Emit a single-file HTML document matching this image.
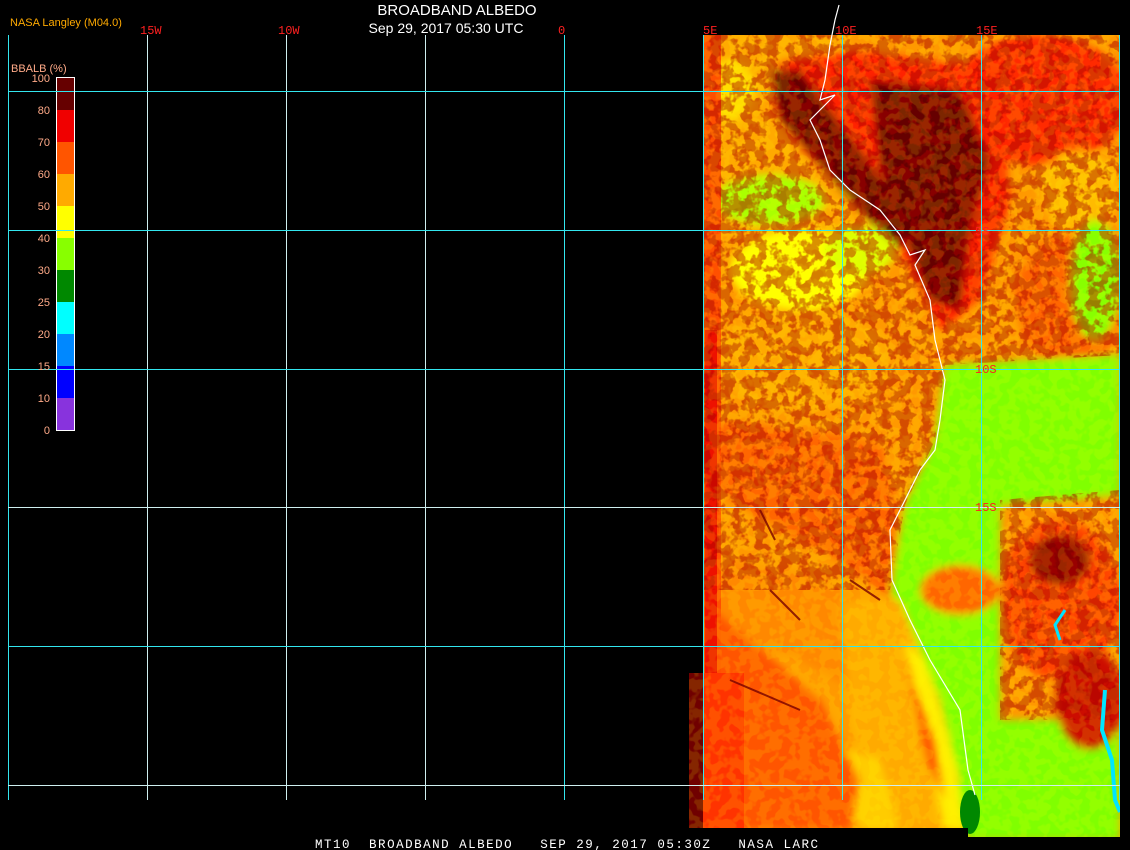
<!DOCTYPE html>
<html><head><meta charset="utf-8"><style>
html,body{margin:0;padding:0;background:#000;width:1130px;height:850px;overflow:hidden}
body{position:relative;font-family:"Liberation Sans",sans-serif}
</style></head><body>
<svg width="1130" height="850" style="position:absolute;left:0;top:0">
<defs>
<filter id="b4"><feGaussianBlur stdDeviation="4"/></filter>
<filter id="noise" x="0" y="0" width="100%" height="100%">
<feTurbulence type="fractalNoise" baseFrequency="0.09" numOctaves="3" seed="4"/>
<feColorMatrix type="matrix" values="0 0 0 0 0.4  0 0 0 0 0  0 0 0 0 0  0 0 0 -9 5.0"/>
</filter>
<filter id="noise2" x="0" y="0" width="100%" height="100%">
<feTurbulence type="fractalNoise" baseFrequency="0.1" numOctaves="2" seed="9"/>
<feColorMatrix type="matrix" values="0 0 0 0 1  0 0 0 0 1  0 0 0 0 0  0 0 0 -10 5.6"/>
</filter>
<clipPath id="map"><polygon points="703,35 1120,35 1120,837 968,837 968,828 689,828 689,673 703,673"/></clipPath>
<clipPath id="spk"><polygon points="703,35 1120,35 1120,355 945,365 935,440 905,505 890,590 703,590"/><polygon points="1000,500 1120,490 1120,720 1000,720"/></clipPath>
</defs>
<g clip-path="url(#map)">
<rect x="689" y="35" width="431" height="802" fill="#ff9900"/>
<g filter="url(#b4)">
<rect x="700" y="35" width="150" height="200" fill="#ffaa00"/>
<ellipse cx="770" cy="200" rx="55" ry="25" fill="#aaff00"/>
<ellipse cx="730" cy="90" rx="25" ry="30" fill="#ffdd00"/>
<ellipse cx="800" cy="270" rx="70" ry="40" fill="#ffff00"/>
<ellipse cx="860" cy="250" rx="35" ry="25" fill="#ddff00"/>
<ellipse cx="800" cy="360" rx="90" ry="50" fill="#ffaa00"/>
<ellipse cx="1040" cy="100" rx="90" ry="65" fill="#ff2a00"/>
<ellipse cx="1080" cy="190" rx="40" ry="40" fill="#ffbb00"/>
<ellipse cx="1070" cy="300" rx="55" ry="65" fill="#ff6600"/>
<ellipse cx="1095" cy="280" rx="25" ry="60" fill="#88ff00"/>
<polygon points="780,60 850,50 1000,70 1010,200 980,300 940,330 900,250 850,200 800,150 770,110" fill="#ff2200"/>
<polygon points="770,70 800,70 860,150 910,220 900,250 850,200 780,120" fill="#660000"/>
<polygon points="870,80 960,90 990,160 970,230 960,310 930,300 905,240 880,170" fill="#660000"/>
<polygon points="945,365 1120,355 1120,495 1000,505 1000,510 905,505 935,440" fill="#80ff00"/>
<polygon points="905,505 1000,505 1000,720 1120,720 1120,840 968,840 955,770 925,660 890,590" fill="#80ff00"/>
<ellipse cx="1060" cy="600" rx="60" ry="80" fill="#ff4400"/>
<ellipse cx="1090" cy="700" rx="35" ry="50" fill="#cc1100"/>
<ellipse cx="1060" cy="560" rx="30" ry="25" fill="#880000"/>
<ellipse cx="960" cy="590" rx="40" ry="25" fill="#ff6600"/>
<polygon points="703,420 880,440 900,520 890,600 840,560 760,520 703,480" fill="#ff6600"/>
<polygon points="703,560 800,570 900,620 930,680 870,700 800,660 703,640" fill="#ff8800"/>
<polygon points="840,600 900,600 940,700 960,780 950,830 880,830 850,720" fill="#ffaa00"/>
<polygon points="905,640 925,660 955,760 965,830 945,830 930,760" fill="#ffee00"/>
<polygon points="820,740 880,760 900,830 860,830" fill="#ffcc00"/>
<polygon points="703,600 820,700 860,780 850,830 703,830" fill="#ff5500"/>
<polygon points="905,660 935,740 945,800 925,760" fill="#ff5500"/>
</g>
<rect x="703" y="35" width="18" height="660" fill="#ff5000"/>
<rect x="705" y="330" width="12" height="360" fill="#ee1100"/>
<rect x="689" y="673" width="55" height="160" fill="#ff3300"/>
<rect x="689" y="673" width="14" height="160" fill="#700000"/>
<g clip-path="url(#spk)">
<rect x="689" y="35" width="431" height="802" filter="url(#noise)" opacity="0.5"/>
</g>
<rect x="689" y="35" width="431" height="802" filter="url(#noise2)" opacity="0.15"/>
<g stroke="#770000" stroke-width="2" fill="none" opacity="0.8">
<path d="M760,510 L775,540"/><path d="M770,590 L800,620"/><path d="M730,680 L800,710"/><path d="M850,580 L880,600"/>
</g>
<ellipse cx="970" cy="812" rx="10" ry="22" fill="#008800"/>
<path d="M1105,690 L1102,730 L1112,760 L1115,800 L1120,812" stroke="#00e5ff" stroke-width="4" fill="none"/>
<path d="M1065,610 L1055,625 L1060,640" stroke="#00e5ff" stroke-width="3" fill="none"/>
</g>
<path d="M839,5 L835,20 L830,45 L825,80 L820,100 L835,95 L810,120 L820,140 L830,170 L850,190 L880,210 L900,235 L910,255 L925,250 L915,265 L930,300 L935,340 L945,380 L940,420 L935,450 L920,470 L905,500 L890,530 L892,580 L910,620 L930,660 L960,710 L968,770 L975,795" stroke="#fff" stroke-width="1.2" fill="none"/>
<g stroke="#33e6ee" stroke-width="1">
<line x1="8.5" y1="35" x2="8.5" y2="800"/>
<line x1="147.5" y1="35" x2="147.5" y2="800" stroke="#cfeff0"/>
<line x1="286.5" y1="35" x2="286.5" y2="800" stroke="#cfeff0"/>
<line x1="425.5" y1="35" x2="425.5" y2="800" stroke="#cfeff0"/>
<line x1="564.5" y1="35" x2="564.5" y2="800"/>
<line x1="703.5" y1="35" x2="703.5" y2="800"/>
<line x1="842.5" y1="35" x2="842.5" y2="800"/>
<line x1="981.5" y1="35" x2="981.5" y2="800"/>
<line x1="1119.5" y1="35" x2="1119.5" y2="800"/>
<line x1="8" y1="91.5" x2="1120" y2="91.5"/>
<line x1="8" y1="230.5" x2="1120" y2="230.5"/>
<line x1="8" y1="369.5" x2="1120" y2="369.5"/>
<line x1="8" y1="507.5" x2="1120" y2="507.5" stroke="#cfeff0"/>
<line x1="8" y1="646.5" x2="1120" y2="646.5"/>
<line x1="8" y1="785.5" x2="1120" y2="785.5" stroke="#cfeff0"/>
</g>
<g>
<rect x="57" y="78" width="17" height="32" fill="#660000"/>
<rect x="57" y="110" width="17" height="32" fill="#f00000"/>
<rect x="57" y="142" width="17" height="32" fill="#ff5500"/>
<rect x="57" y="174" width="17" height="32" fill="#ffaa00"/>
<rect x="57" y="206" width="17" height="32" fill="#ffff00"/>
<rect x="57" y="238" width="17" height="32" fill="#88ff00"/>
<rect x="57" y="270" width="17" height="32" fill="#008800"/>
<rect x="57" y="302" width="17" height="32" fill="#00ffff"/>
<rect x="57" y="334" width="17" height="32" fill="#0088ff"/>
<rect x="57" y="366" width="17" height="32" fill="#0000ff"/>
<rect x="57" y="398" width="17" height="32" fill="#8833dd"/>
<rect x="56.5" y="77.5" width="18" height="353" fill="none" stroke="#fff"/>
<line x1="8" y1="91.5" x2="74" y2="91.5" stroke="#33e6ee"/>
<line x1="8" y1="230.5" x2="74" y2="230.5" stroke="#33e6ee"/>
<line x1="8" y1="369.5" x2="74" y2="369.5" stroke="#33e6ee"/>
</g>
<g font-family="Liberation Sans, sans-serif" font-size="11" fill="#ffaa88" text-anchor="end">
<text x="50" y="82">100</text><text x="50" y="114">80</text><text x="50" y="146">70</text><text x="50" y="178">60</text><text x="50" y="210">50</text><text x="50" y="242">40</text><text x="50" y="274">30</text><text x="50" y="306">25</text><text x="50" y="338">20</text><text x="50" y="370">15</text><text x="50" y="402">10</text><text x="50" y="434">0</text>
<text x="11" y="72" text-anchor="start">BBALB (%)</text>
</g>
<g font-family="Liberation Mono, monospace" font-size="12" fill="#ff2020">
<text x="140" y="34">15W</text><text x="278" y="34">10W</text><text x="558" y="34">0</text>
<text x="703" y="34">5E</text><text x="835" y="34">10E</text><text x="976" y="34">15E</text>
<text x="975" y="235">5S</text><text x="975" y="373">10S</text><text x="975" y="511">15S</text>
</g>
<text x="10" y="26" font-family="Liberation Sans, sans-serif" font-size="11" fill="#ffaa00">NASA Langley (M04.0)</text>
<text x="457" y="15" font-family="Liberation Sans, sans-serif" font-size="15" fill="#fff" text-anchor="middle">BROADBAND ALBEDO</text>
<text x="446" y="33" font-family="Liberation Sans, sans-serif" font-size="14" fill="#fff" text-anchor="middle">Sep 29, 2017 05:30 UTC</text>
<text x="315" y="848" font-family="Liberation Mono, monospace" font-size="12.5" fill="#fff" textLength="503" lengthAdjust="spacing" xml:space="preserve">MT10  BROADBAND ALBEDO   SEP 29, 2017 05:30Z   NASA LARC</text>
</svg>
</body></html>
